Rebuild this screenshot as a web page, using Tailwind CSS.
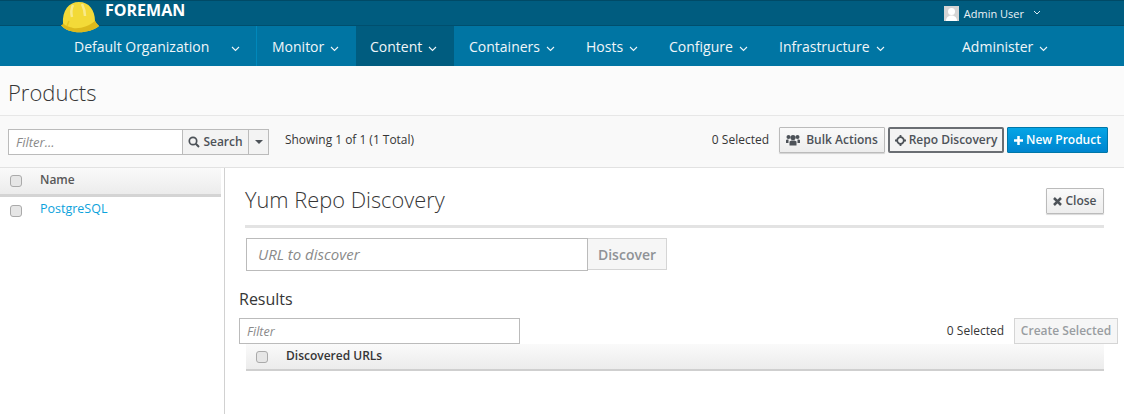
<!DOCTYPE html>
<html><head><meta charset="utf-8">
<script src="https://cdn.jsdelivr.net/npm/@tailwindcss/browser@4"></script>
<title>Products</title></head>
<body class="bg-white font-['Open_Sans',sans-serif] text-[12px] text-[#363636] overflow-hidden">
<div class="relative h-[414px] w-[1124px] overflow-hidden flex flex-col">
  <!-- helmet -->
  <svg class="absolute left-[61px] top-[1px] z-10" width="38" height="33" viewBox="0 0 38 33">
    <path d="M2 23C1 9 8 1 18 1C28 1 34 9 34 20C35 22 37 24 38 25C32 30 22 32 14 31C8 30 3 28 0 24C1 24 2 24 2 23Z" fill="#f3da38"/>
    <path d="M0 24C1 24 2 24 2 22C4 25 9 26 12 27C20 28 28 25 34 20C35 22 37 24 38 25C32 30 22 32 14 31C8 30 3 28 0 24Z" fill="#dcb91c"/>
    <path d="M12 4C10 8 10 12 11 16M21 3C23 7 24 11 24 15" stroke="#f8ea8a" stroke-width="2.500" fill="none"/>
    <path d="M6 25L8 20" stroke="#e6c722" stroke-width="1.500"/>
  </svg>
  <!-- top bar -->
  <div class="h-[26px] shrink-0 bg-[#005c7f] border-t border-t-[#004a66] border-b border-b-[#004f6e] flex items-center relative">
    <span class="ml-[105px] -mt-[6px] text-[16px] font-bold text-white leading-none">FOREMAN</span>
    <div class="ml-auto flex items-center mr-[83px]">
      <svg width="15" height="15" viewBox="0 0 15 15" class="mr-[5px]"><rect width="15" height="15" fill="#d4d4d4"/><circle cx="7.500" cy="5.500" r="3.500" fill="#fff"/><path d="M2 15C2 11 5 9.500 7.500 9.500S13 11 13 15Z" fill="#fff"/></svg>
      <span class="text-[11px] text-[#eaf3f7] leading-none">Admin User</span>
      <svg class="ml-[9px]" width="8" height="6" viewBox="0 0 8 6"><path d="M1 1L4 4L7 1" stroke="#dcebf2" stroke-width="1" fill="none"/></svg>
    </div>
  </div>
  <!-- nav -->
  <nav class="h-[40px] shrink-0 bg-[#0075a3] flex items-stretch text-[14px] text-[#f0f6f9]">
    <div class="w-[257px] pl-[74px] flex items-center border-r border-r-[#0088bb]">
      <span>Default Organization</span>
      <svg class="ml-[22px] mt-[5px]" width="9" height="6" viewBox="0 0 9 6"><path d="M1 1L4.500 4.500L8 1" stroke="#f0f6f9" stroke-width="1.100" fill="none"/></svg>
    </div>
    <div class="w-[99px] pl-[15px] flex items-center gap-[6px]"><span>Monitor</span><svg class="mt-[5px]" width="9" height="6" viewBox="0 0 9 6"><path d="M1 1L4.500 4.500L8 1" stroke="#f0f6f9" stroke-width="1.100" fill="none"/></svg></div>
    <div class="w-[98px] pl-[14px] flex items-center gap-[6px] bg-[#005c7f]"><span>Content</span><svg class="mt-[5px]" width="9" height="6" viewBox="0 0 9 6"><path d="M1 1L4.500 4.500L8 1" stroke="#f0f6f9" stroke-width="1.100" fill="none"/></svg></div>
    <div class="w-[132px] pl-[15px] flex items-center gap-[6px]"><span>Containers</span><svg class="mt-[5px]" width="9" height="6" viewBox="0 0 9 6"><path d="M1 1L4.500 4.500L8 1" stroke="#f0f6f9" stroke-width="1.100" fill="none"/></svg></div>
    <div class="w-[83px] flex items-center gap-[6px]"><span>Hosts</span><svg class="mt-[5px]" width="9" height="6" viewBox="0 0 9 6"><path d="M1 1L4.500 4.500L8 1" stroke="#f0f6f9" stroke-width="1.100" fill="none"/></svg></div>
    <div class="w-[110px] flex items-center gap-[6px]"><span>Configure</span><svg class="mt-[5px]" width="9" height="6" viewBox="0 0 9 6"><path d="M1 1L4.500 4.500L8 1" stroke="#f0f6f9" stroke-width="1.100" fill="none"/></svg></div>
    <div class="w-[183px] flex items-center gap-[6px]"><span>Infrastructure</span><svg class="mt-[5px]" width="9" height="6" viewBox="0 0 9 6"><path d="M1 1L4.500 4.500L8 1" stroke="#f0f6f9" stroke-width="1.100" fill="none"/></svg></div>
    <div class="flex items-center gap-[6px]"><span>Administer</span><svg class="mt-[5px]" width="9" height="6" viewBox="0 0 9 6"><path d="M1 1L4.500 4.500L8 1" stroke="#f0f6f9" stroke-width="1.100" fill="none"/></svg></div>
  </nav>
  <!-- page header -->
  <header class="h-[50px] shrink-0 bg-[#fbfbfb] border-b border-b-[#e7e7e7] flex items-center pl-[8px]">
    <h1 class="text-[22px] font-light text-[#363636] leading-none mt-[3px]">Products</h1>
  </header>
  <!-- toolbar -->
  <div class="h-[52px] shrink-0 bg-[#f9f9f9] border-b border-b-[#e2e2e2] flex items-center pl-[8px] pr-[16px]">
    <div class="flex h-[26px] mt-[1px]">
      <div class="w-[175px] bg-white border border-[#bbb] pl-[7px] pt-[1px] flex items-center italic text-[#8a8a8a] text-[13px]">Filter...</div>
      <div class="w-[65px] bg-[#f3f3f3] border-y border-[#bbb] flex items-center justify-center gap-[3px] font-semibold text-[#4d5258] text-[12px]">
        <svg width="12" height="12" viewBox="0 0 12 12"><circle cx="5" cy="5" r="3.700" stroke="#4d5258" stroke-width="1.700" fill="none"/><path d="M7.800 7.800L11 11" stroke="#4d5258" stroke-width="2"/></svg>Search</div>
      <div class="w-[21px] bg-[#f3f3f3] border border-[#bbb] flex items-center justify-center"><span class="w-0 h-0 border-x-[4px] border-x-transparent border-t-[4px] border-t-[#4d5258]"></span></div>
    </div>
    <span class="ml-[16px] -mt-[3px] text-[#363636] text-[11.950px]">Showing 1 of 1 (1 Total)</span>
    <span class="ml-auto -mt-[3px] text-[#363636] text-[12px]">0 Selected</span>
    <button class="ml-[10px] -mt-[3px] h-[26px] w-[106px] border border-[#bbb] rounded-[1px] bg-linear-to-b from-[#fafafa] to-[#ededed] shadow-[0_1px_1px_rgba(0,0,0,0.15)] flex items-center justify-center gap-[6px] text-[#4d5258] font-semibold text-[12px]">
      <svg width="14" height="12" viewBox="0 0 14 12" fill="#4d5258"><circle cx="7" cy="3.500" r="2.600"/><circle cx="2.500" cy="3" r="2"/><circle cx="11.500" cy="3" r="2"/><path d="M3.500 11.500V8C3.500 7 5 6.500 7 6.500S10.500 7 10.500 8V11.500Z"/><path d="M0 9V6.500C0 5.700 1 5.300 2.500 5.500L2.500 9ZM14 9V6.500C14 5.700 13 5.300 11.500 5.500L11.500 9Z"/></svg>Bulk Actions</button>
    <button class="ml-[3px] -mt-[3px] h-[26px] w-[116px] border-2 border-[#6a6e73] rounded-[2px] bg-[#f3f3f3] flex items-center justify-center gap-[3px] text-[#4d5258] font-semibold text-[12px]">
      <svg width="11" height="11" viewBox="0 0 11 11" fill="none" stroke="#4d5258"><circle cx="5.500" cy="5.500" r="3.300" stroke-width="1.800"/><path d="M5.500 0V3M5.500 8V11M0 5.500H3M8 5.500H11" stroke-width="1.800"/></svg>Repo Discovery</button>
    <button class="ml-[3px] -mt-[3px] h-[26px] w-[101px] border border-[#0077a8] rounded-[1px] bg-linear-to-b from-[#05a5e6] to-[#0085cf] flex items-center justify-center gap-[3px] text-white font-semibold text-[12px]">
      <svg width="9" height="9" viewBox="0 0 9 9"><path d="M4.500 0V9M0 4.500H9" stroke="#fff" stroke-width="2.500"/></svg>New Product</button>
  </div>
  <!-- body -->
  <div class="flex-1 flex min-h-0">
    <aside class="w-[225px] shrink-0 border-r border-r-[#d1d1d1] pr-[3px]">
      <div class="h-[29px] border-b-[3px] border-b-[#d4d4d4] bg-linear-to-b from-[#fafafa] to-[#ececec] flex items-center pl-[10px] pb-[2px] font-semibold text-[12px] text-[#585858]">
        <span class="w-[12px] h-[12px] rounded-[3px] border border-[#aaa] bg-[#e6e6e6] mt-[1px]"></span><span class="ml-[18px] -mt-[1px]">Name</span>
      </div>
      <div class="h-[26px] flex items-center pl-[10px] text-[12.500px] text-[#0ca2dc]">
        <span class="w-[12px] h-[12px] rounded-[3px] border border-[#aaa] bg-[#e6e6e6] mt-[1px]"></span><span class="ml-[18px] -mt-[2px]">PostgreSQL</span>
      </div>
    </aside>
    <main class="flex-1 min-w-0 flex flex-col">
      <div class="pl-[20px] pr-[20px]">
        <div class="h-[57px] border-b-[3px] border-b-[#e3e3e3] flex items-start justify-between box-content">
          <h2 class="text-[21.800px] font-light text-[#363636] leading-none mt-[21px]">Yum Repo Discovery</h2>
          <button class="mt-[20px] h-[26px] w-[58px] border border-[#bbb] rounded-[1px] bg-linear-to-b from-[#fafafa] to-[#ededed] shadow-[0_1px_1px_rgba(0,0,0,0.15)] flex items-center justify-center gap-[3px] font-semibold text-[12px] text-[#4d5258]">
            <svg width="9" height="9" viewBox="0 0 9 9"><path d="M1 1L8 8M8 1L1 8" stroke="#4d5258" stroke-width="2.500"/></svg>Close</button>
        </div>
      </div>
      <div class="flex ml-[21px] mt-[10px] h-[33px]">
        <div class="w-[342px] border border-[#bbb] bg-white pl-[11px] flex items-center italic text-[15px] text-[#8a8a8a]">URL to discover</div>
        <div class="w-[79px] h-[32px] border border-l-0 border-[#d5d5d5] bg-[#f6f6f6] flex items-center justify-center font-semibold text-[14px] text-[#8f9296]">Discover</div>
      </div>
      <h3 class="ml-[14px] mt-[17px] text-[16px] leading-[22px] text-[#363636]">Results</h3>
      <div class="flex items-center ml-[14px] mr-[6px] mt-[8px] h-[26px]">
        <div class="w-[281px] h-[26px] border border-[#bbb] bg-white pl-[7px] pt-[2px] flex items-center italic text-[12.500px] text-[#8a8a8a]">Filter</div>
        <span class="ml-auto text-[12px] text-[#363636]">0 Selected</span>
        <div class="ml-[10px] w-[104px] h-[26px] border border-[#d5d5d5] bg-[#f6f6f6] flex items-center justify-center font-semibold text-[12px] text-[#999da1]">Create Selected</div>
      </div>
      <div class="ml-[21px] mr-[20px] h-[27px] border-b-[2px] border-b-[#cfcfcf] bg-linear-to-b from-[#fafafa] to-[#ececec] flex items-center pl-[10px] pb-[2px] font-semibold text-[12px] text-[#363636]">
        <span class="w-[12px] h-[12px] rounded-[3px] border border-[#aaa] bg-[#e6e6e6] mt-[3px]"></span><span class="ml-[18px] mt-[1px]">Discovered URLs</span>
      </div>
    </main>
  </div>
</div>
</body></html>
